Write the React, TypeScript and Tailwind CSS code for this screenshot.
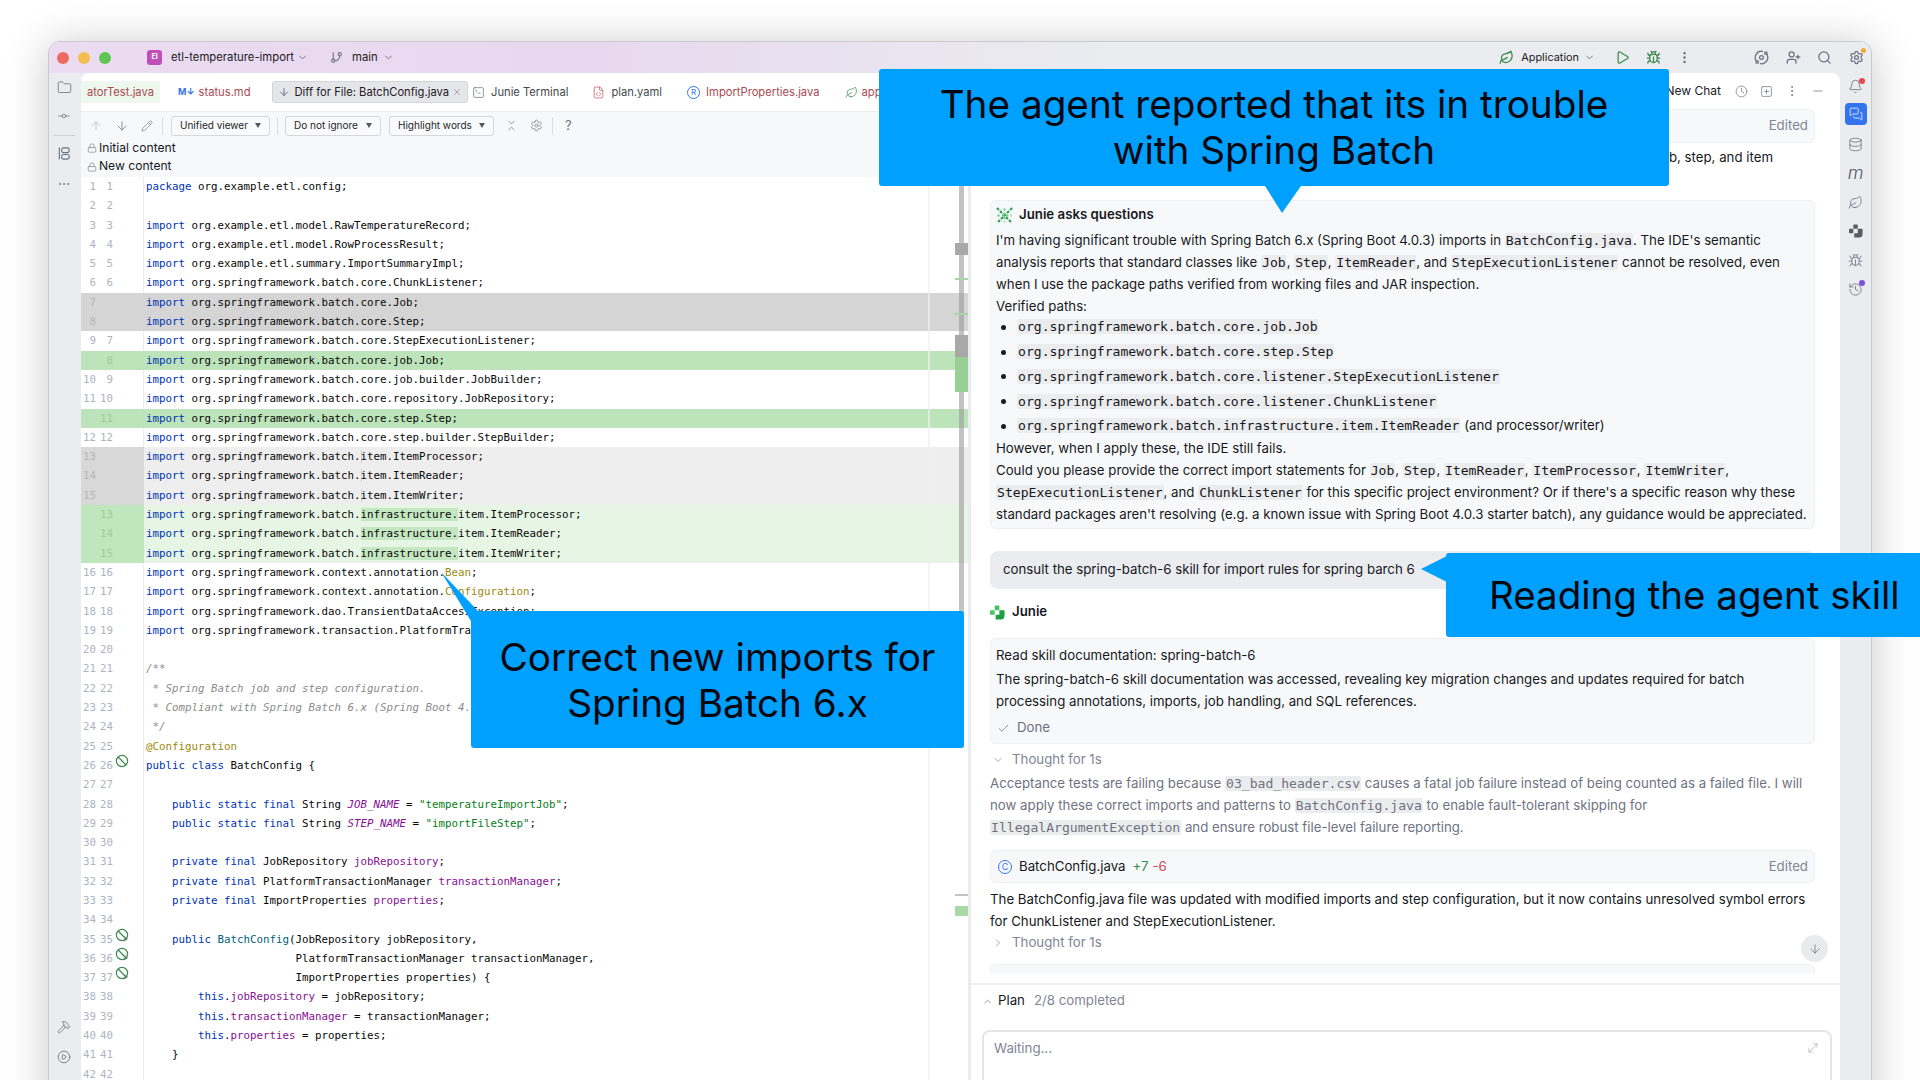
import React from "react";
import {
  Folder, GitCommitHorizontal, Ellipsis, ArrowUp, ArrowDown, Pencil, ChevronDown, ChevronRight, ChevronUp,
  Settings, Bell, Database, Search, UserPlus, EllipsisVertical, Bug, Play, Clock, Minus, X, Check, Leaf,
  GitBranch, SquareTerminal, FileCode, Lock, Hammer, CirclePlay, History, MoveDiagonal, SquarePlus, Orbit, ChevronsDownUp, MessagesSquare,
} from "lucide-react";

const TOK: Record<string, string> = {
  k: "text-[#0033b3]",
  p: "text-[#080808]",
  f: "text-[#871094]",
  fi: "text-[#871094] italic",
  s: "text-[#067d17]",
  c: "text-[#8c8c8c] italic",
  a: "text-[#9e880d]",
  m: "text-[#00627a]",
};

type Seg = [string, string] | [string, string, string];
type Row = { o?: number; n?: number; t: "x" | "d" | "a" | "dw" | "aw"; s: Seg[]; icon?: 1 | 2 };

const imp = (rest: string, t: Row["t"], o?: number, n?: number): Row => ({ o, n, t, s: [["k", "import"], ["p", " " + rest]] });
const impW = (word: string, rest: string, t: Row["t"], o?: number, n?: number): Row => ({
  o, n, t,
  s: word
    ? [["k", "import"], ["p", " org.springframework.batch."], ["p", word, "bg-[#c4e7c1]"], ["p", rest]]
    : [["k", "import"], ["p", " org.springframework.batch."], ["p", rest, "shadow-[inset_1px_0_0_#cfcfcf]"]],
});

const rows: Row[] = [
  { o: 1, n: 1, t: "x", s: [["k", "package"], ["p", " org.example.etl.config;"]] },
  { o: 2, n: 2, t: "x", s: [] },
  imp("org.example.etl.model.RawTemperatureRecord;", "x", 3, 3),
  imp("org.example.etl.model.RowProcessResult;", "x", 4, 4),
  imp("org.example.etl.summary.ImportSummaryImpl;", "x", 5, 5),
  imp("org.springframework.batch.core.ChunkListener;", "x", 6, 6),
  imp("org.springframework.batch.core.Job;", "d", 7),
  imp("org.springframework.batch.core.Step;", "d", 8),
  imp("org.springframework.batch.core.StepExecutionListener;", "x", 9, 7),
  imp("org.springframework.batch.core.job.Job;", "a", undefined, 8),
  imp("org.springframework.batch.core.job.builder.JobBuilder;", "x", 10, 9),
  imp("org.springframework.batch.core.repository.JobRepository;", "x", 11, 10),
  imp("org.springframework.batch.core.step.Step;", "a", undefined, 11),
  imp("org.springframework.batch.core.step.builder.StepBuilder;", "x", 12, 12),
  impW("", "item.ItemProcessor;", "dw", 13),
  impW("", "item.ItemReader;", "dw", 14),
  impW("", "item.ItemWriter;", "dw", 15),
  impW("infrastructure.", "item.ItemProcessor;", "aw", undefined, 13),
  impW("infrastructure.", "item.ItemReader;", "aw", undefined, 14),
  impW("infrastructure.", "item.ItemWriter;", "aw", undefined, 15),
  { o: 16, n: 16, t: "x", s: [["k", "import"], ["p", " org.springframework.context.annotation."], ["a", "Bean"], ["p", ";"]] },
  { o: 17, n: 17, t: "x", s: [["k", "import"], ["p", " org.springframework.context.annotation."], ["a", "Configuration"], ["p", ";"]] },
  imp("org.springframework.dao.TransientDataAccessException;", "x", 18, 18),
  imp("org.springframework.transaction.PlatformTransactionManager;", "x", 19, 19),
  { o: 20, n: 20, t: "x", s: [] },
  { o: 21, n: 21, t: "x", s: [["c", "/**"]] },
  { o: 22, n: 22, t: "x", s: [["c", " * Spring Batch job and step configuration."]] },
  { o: 23, n: 23, t: "x", s: [["c", " * Compliant with Spring Batch 6.x (Spring Boot 4.0.3)."]] },
  { o: 24, n: 24, t: "x", s: [["c", " */"]] },
  { o: 25, n: 25, t: "x", s: [["a", "@Configuration"]] },
  { o: 26, n: 26, t: "x", icon: 1, s: [["k", "public class"], ["p", " BatchConfig {"]] },
  { o: 27, n: 27, t: "x", s: [] },
  { o: 28, n: 28, t: "x", s: [["p", "    "], ["k", "public static final"], ["p", " String "], ["fi", "JOB_NAME"], ["p", " = "], ["s", "\"temperatureImportJob\""], ["p", ";"]] },
  { o: 29, n: 29, t: "x", s: [["p", "    "], ["k", "public static final"], ["p", " String "], ["fi", "STEP_NAME"], ["p", " = "], ["s", "\"importFileStep\""], ["p", ";"]] },
  { o: 30, n: 30, t: "x", s: [] },
  { o: 31, n: 31, t: "x", s: [["p", "    "], ["k", "private final"], ["p", " JobRepository "], ["f", "jobRepository"], ["p", ";"]] },
  { o: 32, n: 32, t: "x", s: [["p", "    "], ["k", "private final"], ["p", " PlatformTransactionManager "], ["f", "transactionManager"], ["p", ";"]] },
  { o: 33, n: 33, t: "x", s: [["p", "    "], ["k", "private final"], ["p", " ImportProperties "], ["f", "properties"], ["p", ";"]] },
  { o: 34, n: 34, t: "x", s: [] },
  { o: 35, n: 35, t: "x", icon: 2, s: [["p", "    "], ["k", "public"], ["p", " "], ["m", "BatchConfig"], ["p", "(JobRepository jobRepository,"]] },
  { o: 36, n: 36, t: "x", icon: 2, s: [["p", "                       PlatformTransactionManager transactionManager,"]] },
  { o: 37, n: 37, t: "x", icon: 2, s: [["p", "                       ImportProperties properties) {"]] },
  { o: 38, n: 38, t: "x", s: [["p", "        "], ["k", "this"], ["p", "."], ["f", "jobRepository"], ["p", " = jobRepository;"]] },
  { o: 39, n: 39, t: "x", s: [["p", "        "], ["k", "this"], ["p", "."], ["f", "transactionManager"], ["p", " = transactionManager;"]] },
  { o: 40, n: 40, t: "x", s: [["p", "        "], ["k", "this"], ["p", "."], ["f", "properties"], ["p", " = properties;"]] },
  { o: 41, n: 41, t: "x", s: [["p", "    }"]] },
  { o: 42, n: 42, t: "x", s: [] },
];

const ROW_BG: Record<Row["t"], string> = {
  x: "bg-white",
  d: "bg-[#d5d5d5]",
  a: "bg-[#bce3ba]",
  dw: "bg-[#eeeeee]",
  aw: "bg-[#e6f5e4]",
};
const GUT_BG: Record<Row["t"], string> = {
  x: "bg-white border-r border-[#ebecf0]",
  d: "bg-[#d5d5d5]",
  a: "bg-[#bce3ba]",
  dw: "bg-[#d8d8d8]",
  aw: "bg-[#bfe6bc]",
};

function GutterIcon({ kind }: { kind: 1 | 2 }) {
  return (
    <svg viewBox="0 0 14 14" className="absolute left-[34px] top-[-2px] w-[14px] h-[14px]" fill="none" stroke="#3d8a4e" strokeWidth="1.2">
      <circle cx="7" cy="7" r="5.6" />
      <path d="M3.2 3 L11 11" />
      {kind === 2 && <path d="M9 13 L12.5 11 L10 8.5" stroke="#6c707e" strokeWidth="0.9" />}
    </svg>
  );
}

function CodeRow({ r }: { r: Row }) {
  const numCol = r.t === "x" ? "text-[#aeb3c2]" : r.t === "d" || r.t === "dw" ? "text-[#b6b6b6]" : "text-[#9fcb9d]";
  return (
    <div className={`flex h-[19.3px] ${ROW_BG[r.t]}`}>
      <div className={`relative flex w-[63px] shrink-0 ${GUT_BG[r.t]} ${numCol} leading-[19.3px]`}>
        <span className="w-[15px] text-right">{r.o ?? ""}</span>
        <span className="w-[17px] text-right">{r.n ?? ""}</span>
        {r.icon && <GutterIcon kind={r.icon} />}
      </div>
      <div className="pl-[2px] whitespace-pre leading-[19.3px]">
        {r.s.map((seg, i) => (
          <span key={i} className={`${TOK[seg[0]]} ${seg[2] ?? ""}`}>{seg[1]}</span>
        ))}
      </div>
    </div>
  );
}

function Inline({ text }: { text: string }) {
  const parts = text.split("`");
  return (
    <>
      {parts.map((p, i) =>
        i % 2 ? (
          <code key={i} className="font-['DejaVu_Sans_Mono',monospace] text-[13.1px] bg-[#ebecee] rounded-[2px] px-[1px]">{p}</code>
        ) : (
          <span key={i}>{p}</span>
        )
      )}
    </>
  );
}

function L({ children, cls = "" }: { children: string; cls?: string }) {
  return <div className={`h-[22px] leading-[22px] whitespace-nowrap ${cls}`}><Inline text={children} /></div>;
}

function Bullet({ path, tail }: { path: string; tail?: string }) {
  return (
    <div className="flex items-center h-[24.75px] whitespace-nowrap pl-[5px]">
      <span className="w-[5px] h-[5px] rounded-full bg-[#1a1c20] mr-[11px]" />
      <div><Inline text={"`" + path + "`" + (tail ?? "")} /></div>
    </div>
  );
}

function Tab({ icon, label, cls = "text-[#45474d]", ml = "", active }: { icon?: React.ReactNode; label: React.ReactNode; cls?: string; ml?: string; active?: boolean }) {
  return (
    <div className={`flex items-center h-[22px] whitespace-nowrap ${ml} ${cls} ${active ? "bg-[#e4e6ea] border border-[#d4d6da] rounded-[3px] px-[5px]" : ""}`}>
      {icon}
      {label}
    </div>
  );
}

function Dropdown({ label, w, ml }: { label: string; w: string; ml: string }) {
  return (
    <div className={`flex items-center justify-between h-[20px] px-[8px] rounded-[3px] border border-[#d5d7dc] bg-[#f9fafb] text-[10px] text-[#22252a] ${w} ${ml}`}>
      <span className="whitespace-nowrap">{label}</span>
      <span className="w-0 h-0 border-x-[3.5px] border-x-transparent border-t-[5px] border-t-[#55585f]" />
    </div>
  );
}

function JunieAsksIcon() {
  return (
    <svg viewBox="0 0 18 18" className="w-[17px] h-[17px] mr-[6px]" fill="none" strokeWidth="2.2">
      <path d="M1 1L17 17M17 1L1 17" stroke="#2f9e5a" strokeDasharray="3 1.5" />
      <path d="M9 1.5V16.5M1.5 9H16.5" stroke="#6fcb85" strokeDasharray="2.4 2.2" />
    </svg>
  );
}

function JunieLogo({ size = "w-[15px] h-[15px]", a = "#47c35f", b = "#1f9f45" }: { size?: string; a?: string; b?: string }) {
  return (
    <svg viewBox="0 0 16 16" className={size}>
      <rect x="5" y="0.5" width="5" height="5" rx="1" fill={a} />
      <rect x="0" y="5.5" width="5" height="5" rx="1" fill={a} />
      <path d="M10 5.5h5.5v6a4 4 0 0 1-4 4H6v-5h4z" fill={b} />
    </svg>
  );
}

function StructureIcon() {
  return (
    <svg viewBox="0 0 16 16" className="w-[15px] h-[15px] mt-[10px]" fill="none" stroke="currentColor" strokeWidth="1.2">
      <path d="M2.5 1.5V14" />
      <rect x="5" y="2" width="8" height="5" rx="2" />
      <rect x="5" y="9" width="8" height="5" rx="2" />
    </svg>
  );
}

export default function App() {
  return (
    <div className="relative w-[1920px] h-[1080px] overflow-hidden bg-white pt-[41px] pl-[48px] font-['Inter',sans-serif] text-[#16181c]">
      <div className="w-[1824px] h-[1100px] rounded-t-[12px] border border-[#c9cacd] bg-[#eaecf0] shadow-[0_4px_44px_rgba(0,0,0,0.22)] flex flex-col overflow-hidden">
        {/* title bar */}
        <div className="h-[31px] shrink-0 flex items-center bg-[linear-gradient(90deg,#ecdcf2_0%,#e8d8ef_30%,#eaecf0_58%)] text-[11.3px] text-[#1e2024]">
          <div className="flex items-center gap-[9px] pl-[8px]">
            <span className="w-[12px] h-[12px] rounded-full bg-[#ed6a5e]" />
            <span className="w-[12px] h-[12px] rounded-full bg-[#f4bf4f]" />
            <span className="w-[12px] h-[12px] rounded-full bg-[#61c554]" />
          </div>
          <div className="ml-[36px] w-[15px] h-[15px] rounded-[3px] bg-[#c04fb8] text-white text-[7px] font-bold flex items-center justify-center">EI</div>
          <span className="ml-[9px] whitespace-nowrap">etl-temperature-import</span>
          <ChevronDown className="w-[11px] h-[11px] ml-[3px] text-[#6c707e]" />
          <GitBranch className="w-[13px] h-[13px] ml-[22px] text-[#6c707e]" />
          <span className="ml-[9px]">main</span>
          <ChevronDown className="w-[11px] h-[11px] ml-[5px] text-[#6c707e]" />
          <div className="flex-1" />
          <Leaf className="w-[15px] h-[15px] text-[#3d8a4e]" />
          <span className="ml-[7px] text-[10.9px]">Application</span>
          <ChevronDown className="w-[11px] h-[11px] ml-[5px] text-[#6c707e]" />
          <Play className="w-[15px] h-[15px] ml-[20px] text-[#3d8a4e]" />
          <Bug className="w-[15px] h-[15px] ml-[16px] text-[#3d8a4e]" />
          <EllipsisVertical className="w-[15px] h-[15px] ml-[16px] text-[#6c707e]" />
          <Orbit className="w-[15px] h-[15px] ml-[62px] text-[#6c707e]" />
          <UserPlus className="w-[15px] h-[15px] ml-[17px] text-[#6c707e]" />
          <Search className="w-[15px] h-[15px] ml-[16px] text-[#6c707e]" />
          <div className="relative ml-[17px] mr-[7px]">
            <Settings className="w-[15px] h-[15px] text-[#6c707e]" />
            <span className="absolute -top-[2px] -right-[2px] w-[5px] h-[5px] rounded-full bg-[#f2a93b]" />
          </div>
        </div>

        <div className="flex flex-1 min-h-0">
          {/* left strip */}
          <div className="w-[32px] shrink-0 flex flex-col items-center text-[#6c707e] pr-[2px]">
            <Folder className="w-[15px] h-[15px] mt-[7px]" strokeWidth={1.3} />
            <GitCommitHorizontal className="w-[14px] h-[14px] mt-[14px]" strokeWidth={1.3} />
            <div className="w-[22px] h-px bg-[#cfd1d6] mt-[12px]" />
            <StructureIcon />
            <Ellipsis className="w-[14px] h-[14px] mt-[16px]" strokeWidth={1.4} />
            <Hammer className="w-[14px] h-[14px] mt-[829px]" strokeWidth={1.4} />
            <CirclePlay className="w-[14px] h-[14px] mt-[16px]" strokeWidth={1.4} />
          </div>

          {/* main panel */}
          <div className="w-[1759px] shrink-0 flex bg-white rounded-t-[8px] overflow-hidden">
            {/* editor */}
            <div className="relative w-[887px] shrink-0 flex flex-col overflow-hidden">
              <div className="h-[39px] shrink-0 flex items-center border-b border-[#ebecf0] text-[11.2px]">
                <div className="h-[22px] w-[79px] flex items-center justify-end pr-[6px] bg-[#eef8ee] text-[#a94a52] overflow-hidden">atorTest.java</div>
                <Tab ml="ml-[18px]" cls="text-[#a94a52]" icon={<span className="text-[#3574f0] text-[9px] font-bold mr-[4px]">M↓</span>} label="status.md" />
                <Tab ml="ml-[21px]" active cls="text-[#1e2024]" icon={<ArrowDown className="w-[12px] h-[12px] mr-[5px] text-[#6c707e]" />} label={<>Diff for File: BatchConfig.java<X className="w-[10px] h-[10px] ml-[3px] text-[#9a9da6]" /></>} />
                <Tab ml="ml-[4px]" icon={<SquareTerminal className="w-[13px] h-[13px] mr-[6px] text-[#6c707e]" strokeWidth={1.3} />} label="Junie Terminal" />
                <Tab ml="ml-[24px]" icon={<FileCode className="w-[13px] h-[13px] mr-[6px] text-[#c9485c]" strokeWidth={1.3} />} label="plan.yaml" />
                <Tab ml="ml-[25px]" cls="text-[#a94a52]" icon={<span className="w-[13px] h-[13px] mr-[6px] rounded-full border border-[#3574f0] text-[#3574f0] text-[8px] flex items-center justify-center">R</span>} label="ImportProperties.java" />
                <Tab ml="ml-[25px]" cls="text-[#a94a52]" icon={<Leaf className="w-[13px] h-[13px] mr-[4px] text-[#3d8a4e]" strokeWidth={1.3} />} label="application.yaml" />
              </div>
              <div className="h-[65px] shrink-0 bg-[#f7f8fa] text-[12.1px]">
                <div className="h-[27px] flex items-center text-[#6c707e]">
                  <ArrowUp className="w-[14px] h-[14px] ml-[8px] text-[#b5b8c0]" strokeWidth={1.3} />
                  <ArrowDown className="w-[14px] h-[14px] ml-[12px]" strokeWidth={1.3} />
                  <Pencil className="w-[12px] h-[12px] ml-[12px]" strokeWidth={1.3} />
                  <div className="w-px h-[18px] bg-[#dcdee3] ml-[9px]" />
                  <Dropdown label="Unified viewer" w="w-[99px]" ml="ml-[8px]" />
                  <div className="w-px h-[18px] bg-[#dcdee3] ml-[7px]" />
                  <Dropdown label="Do not ignore" w="w-[96px]" ml="ml-[7px]" />
                  <Dropdown label="Highlight words" w="w-[105px]" ml="ml-[8px]" />
                  <ChevronsDownUp className="w-[13px] h-[13px] ml-[11px]" strokeWidth={1.3} />
                  <Settings className="w-[13px] h-[13px] ml-[12px]" strokeWidth={1.3} />
                  <div className="w-px h-[18px] bg-[#dcdee3] ml-[9px]" />
                  <span className="ml-[12px] text-[13px]">?</span>
                </div>
                <div className="h-[18px] flex items-center pl-[6px] whitespace-nowrap"><Lock className="w-[10px] h-[10px] mr-[2px] text-[#6c707e]" strokeWidth={1.4} />Initial content</div>
                <div className="h-[19px] flex items-center pl-[6px] whitespace-nowrap"><Lock className="w-[10px] h-[10px] mr-[2px] text-[#6c707e]" strokeWidth={1.4} />New content</div>
              </div>
              <div className="relative flex-1 min-h-0 font-['DejaVu_Sans_Mono',monospace] text-[10.8px]">
                {rows.map((r, i) => <CodeRow key={i} r={r} />)}
                <div className="absolute left-[847px] top-0 bottom-0 w-[1.5px] bg-[#f0f0f0]/70" />
                <div className="absolute left-[878px] top-0 h-[571px] w-[5px] rounded-full bg-[#9a9a9a]/60" />
                <div className="absolute left-[874px] top-[66px] h-[12px] w-[13px] bg-[#a8a8a8]" />
                <div className="absolute left-[874px] top-[101px] h-[2px] w-[13px] bg-[#a8d4a6]" />
                <div className="absolute left-[874px] top-[136px] h-[2px] w-[13px] bg-[#a8d4a6]" />
                <div className="absolute left-[874px] top-[158px] h-[22px] w-[13px] bg-[#a8a8a8]" />
                <div className="absolute left-[874px] top-[180px] h-[35px] w-[13px] bg-[#97cf95]" />
                <div className="absolute left-[874px] top-[717px] h-[2px] w-[13px] bg-[#c4c4c4]" />
                <div className="absolute left-[874px] top-[729px] h-[10px] w-[13px] bg-[#a8d9a6]" />
              </div>
            </div>

            {/* chat */}
            <div className="relative w-[872px] shrink-0 flex flex-col border-l-[3px] border-[#eaecf0] text-[13.25px]">
              <div className="h-[36px] shrink-0 flex items-center justify-end text-[#6c707e]">
                <span className="text-[#1e2024] text-[12px] whitespace-nowrap">New Chat</span>
                <Clock className="w-[13px] h-[13px] ml-[14px]" strokeWidth={1.3} />
                <SquarePlus className="w-[13px] h-[13px] ml-[12px]" strokeWidth={1.3} />
                <EllipsisVertical className="w-[14px] h-[14px] ml-[12px]" strokeWidth={1.4} />
                <Minus className="w-[14px] h-[14px] ml-[12px] mr-[15px]" strokeWidth={1.3} />
              </div>
              <div className="h-[865px] shrink-0 overflow-hidden pl-[19px] pr-[25px]">
                <div className="h-[34px] rounded-[6px] bg-[#f7f8fa] border border-[#eeeff2] flex items-center justify-end pr-[6px] text-[#818594]">Edited</div>
                <div className="mt-[3px] h-[22px] leading-[22px] text-right pr-[42px] whitespace-nowrap">b, step, and item</div>

                <div className="mt-[32px] h-[329px] rounded-[6px] bg-[#f7f8fa] border border-[#eeeff2] pt-[3px] pl-[5px] whitespace-nowrap">
                  <div className="h-[22px] flex items-center font-semibold"><JunieAsksIcon />Junie asks questions</div>
                  <div className="mt-[3px]">
                    <L>{"I'm having significant trouble with Spring Batch 6.x (Spring Boot 4.0.3) imports in `BatchConfig.java`. The IDE's semantic"}</L>
                    <L>{"analysis reports that standard classes like `Job`, `Step`, `ItemReader`, and `StepExecutionListener` cannot be resolved, even"}</L>
                    <L>{"when I use the package paths verified from working files and JAR inspection."}</L>
                    <L>{"Verified paths:"}</L>
                  </div>
                  <div className="-mt-[2px]">
                    <Bullet path="org.springframework.batch.core.job.Job" />
                    <Bullet path="org.springframework.batch.core.step.Step" />
                    <Bullet path="org.springframework.batch.core.listener.StepExecutionListener" />
                    <Bullet path="org.springframework.batch.core.listener.ChunkListener" />
                    <Bullet path="org.springframework.batch.infrastructure.item.ItemReader" tail=" (and processor/writer)" />
                  </div>
                  <div className="-mt-[2px]">
                    <L>{"However, when I apply these, the IDE still fails."}</L>
                    <L>{"Could you please provide the correct import statements for `Job`, `Step`, `ItemReader`, `ItemProcessor`, `ItemWriter`,"}</L>
                    <L>{"`StepExecutionListener`, and `ChunkListener` for this specific project environment? Or if there's a specific reason why these"}</L>
                    <L>{"standard packages aren't resolving (e.g. a known issue with Spring Boot 4.0.3 starter batch), any guidance would be appreciated."}</L>
                  </div>
                </div>

                <div className="mt-[22px] h-[38px] rounded-[8px] bg-[#ebecf0] flex items-center pl-[13px] whitespace-nowrap">consult the spring-batch-6 skill for import rules for spring barch 6</div>
                <div className="mt-[12px] h-[22px] flex items-center font-semibold"><JunieLogo /><span className="ml-[7px]">Junie</span></div>

                <div className="mt-[15px] h-[106px] rounded-[6px] bg-[#f7f8fa] border border-[#eeeff2] pt-[5px] pl-[5px] whitespace-nowrap">
                  <L>Read skill documentation: spring-batch-6</L>
                  <div className="mt-[2px]">
                    <L>The spring-batch-6 skill documentation was accessed, revealing key migration changes and updates required for batch</L>
                    <L>processing annotations, imports, job handling, and SQL references.</L>
                  </div>
                  <div className="mt-[5px] h-[22px] flex items-center text-[#6c707e]"><Check className="w-[13px] h-[13px] ml-[1px] mr-[7px]" strokeWidth={1.4} />Done</div>
                </div>

                <div className="mt-[5px] h-[22px] flex items-center text-[#818594]"><ChevronDown className="w-[12px] h-[12px] ml-[2px] mr-[8px]" strokeWidth={1.4} />Thought for 1s</div>
                <div className="mt-[1px] text-[#6f737f]">
                  <L>{"Acceptance tests are failing because `03_bad_header.csv` causes a fatal job failure instead of being counted as a failed file. I will"}</L>
                  <L>{"now apply these correct imports and patterns to `BatchConfig.java` to enable fault-tolerant skipping for"}</L>
                  <L>{"`IllegalArgumentException` and ensure robust file-level failure reporting."}</L>
                </div>

                <div className="mt-[12px] h-[33px] rounded-[6px] bg-[#f7f8fa] border border-[#eeeff2] flex items-center pl-[7px] pr-[6px] whitespace-nowrap">
                  <span className="w-[14px] h-[14px] rounded-full border border-[#3574f0] text-[#3574f0] text-[9px] flex items-center justify-center mr-[7px]">C</span>
                  BatchConfig.java
                  <span className="ml-[7px] text-[#2f8f4e]">+7</span>
                  <span className="ml-[4px] text-[#c9485c]">-6</span>
                  <span className="ml-auto text-[#818594]">Edited</span>
                </div>
                <div className="mt-[5px]">
                  <L>The BatchConfig.java file was updated with modified imports and step configuration, but it now contains unresolved symbol errors</L>
                  <L>for ChunkListener and StepExecutionListener.</L>
                </div>
                <div className="h-[22px] flex items-center text-[#818594]"><ChevronRight className="w-[12px] h-[12px] ml-[2px] mr-[8px]" strokeWidth={1.4} />Thought for 1s</div>
                <div className="mt-[10px] h-[30px] rounded-t-[6px] bg-[#f7f8fa] border border-[#eeeff2]" />
              </div>
              <div className="absolute left-[830px] top-[862px] w-[27px] h-[27px] rounded-full bg-[#e8eaee] flex items-center justify-center text-[#6c707e]">
                <ArrowDown className="w-[14px] h-[14px]" strokeWidth={1.3} />
              </div>
              <div className="mt-[9px] h-[34px] shrink-0 border-t-[2px] border-[#eceef1] flex items-center pl-[11px] whitespace-nowrap">
                <ChevronUp className="w-[11px] h-[11px] mr-[5px] text-[#6c707e]" strokeWidth={1.5} />
                Plan
                <span className="ml-[9px] text-[#818594]">2/8 completed</span>
              </div>
              <div className="mt-[13px] mx-[11px] w-[850px] h-[120px] shrink-0 rounded-[8px] border-2 border-[#e3e5e9] pl-[10px] pt-[7px] flex justify-between text-[#818594] pr-[10px]">
                Waiting...
                <MoveDiagonal className="w-[14px] h-[14px] mt-[2px] text-[#a8adbd]" strokeWidth={1.2} />
              </div>
            </div>
          </div>

          {/* right strip */}
          <div className="flex-1 flex flex-col items-center text-[#6c707e]">
            <div className="relative mt-[6px]"><Bell className="w-[15px] h-[15px]" strokeWidth={1.3} /><span className="absolute -top-[1px] -right-[2px] w-[6px] h-[6px] rounded-full bg-[#e5484d]" /></div>
            <div className="mt-[9px] w-[22px] h-[22px] shrink-0 rounded-[4px] bg-[#3574f0] flex items-center justify-center text-white"><MessagesSquare className="w-[14px] h-[14px]" strokeWidth={1.3} /></div>
            <Database className="w-[15px] h-[15px] mt-[12px]" strokeWidth={1.3} />
            <span className="mt-[13px] h-[16px] leading-[16px] italic font-light text-[#55585f] text-[18px]">m</span>
            <Leaf className="w-[15px] h-[15px] mt-[14px]" strokeWidth={1.3} />
            <div className="mt-[14px] h-[14px]"><JunieLogo size="w-[14px] h-[14px]" a="#5a5d66" b="#5a5d66" /></div>
            <Bug className="w-[15px] h-[15px] mt-[15px]" strokeWidth={1.3} />
            <div className="relative mt-[14px]"><History className="w-[15px] h-[15px]" strokeWidth={1.3} /><span className="absolute -top-[2px] -right-[2px] w-[6px] h-[6px] rounded-full bg-[#7b4fd9]" /></div>
          </div>
        </div>
      </div>

      {/* callouts */}
      <div className="absolute left-[879px] top-[69px] w-[790px] h-[117px] rounded-[3px] bg-[#00a0ff] text-[38.7px] leading-[46px] text-center text-[#05070d] pt-[12px]">
        The agent reported that its in trouble<br />with Spring Batch
      </div>
      <svg className="absolute left-[1265px] top-[186px] w-[36px] h-[28px]" viewBox="0 0 36 28"><path d="M0 0H36L17 27Z" fill="#00a0ff" /></svg>

      <div className="absolute left-[1446px] top-[553px] w-[474px] h-[84px] rounded-l-[3px] bg-[#00a0ff] text-[38.5px] leading-[84px] pl-[43px] whitespace-nowrap text-[#05070d]">
        Reading the agent skill
      </div>
      <svg className="absolute left-[1420px] top-[556px] w-[27px] h-[26px]" viewBox="0 0 27 26"><path d="M27 0V26L1 13Z" fill="#00a0ff" /></svg>

      <div className="absolute left-[471px] top-[611px] w-[493px] h-[137px] rounded-[3px] bg-[#00a0ff] text-[38.7px] leading-[46px] text-center text-[#05070d] pt-[23px]">
        Correct new imports for<br />Spring Batch 6.x
      </div>
      <svg className="absolute left-[440px] top-[571px] w-[40px] h-[52px]" viewBox="0 0 40 52"><path d="M1 1L39 41L31 50Z" fill="#00a0ff" /></svg>
    </div>
  );
}
